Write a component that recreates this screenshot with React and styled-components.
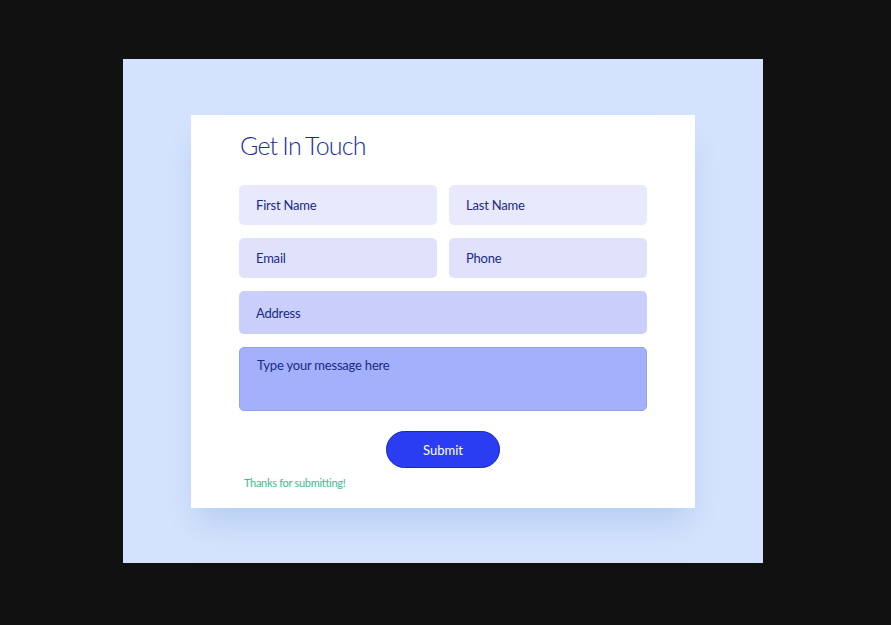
import React from 'react'
import styled, { createGlobalStyle } from 'styled-components'

const GlobalStyle = createGlobalStyle`
    html, body {
        margin: 0;
        padding: 0;
        background: #111111;
    }
    body {
        font-family: Lato, "Open Sans", sans-serif;
    }
`

const Page = styled.div`
    width: 891px;
    height: 625px;
    padding: 59px 0 0 123px;
    box-sizing: border-box;
`

const Backdrop = styled.div`
    width: 640px;
    height: 504px;
    background: #d4e3fd;
    padding: 56px 0 0 68px;
    box-sizing: border-box;
`

const Card = styled.div`
    width: 504px;
    height: 393px;
    background: #ffffff;
    box-shadow: 0 20px 30px -6px rgba(160, 190, 235, 0.6);
    padding: 14px 48px 0;
    box-sizing: border-box;
    display: flex;
    flex-direction: column;
`

const Title = styled.h1`
    margin: 0 0 23px 1px;
    font-size: 25px;
    line-height: 33px;
    font-weight: 300;
    color: #1a2d9c;
    letter-spacing: -0.8px;
    word-spacing: -1px;
`

const Form = styled.div`
    display: flex;
    flex-direction: column;
    gap: 13px;
`

const Row = styled.div`
    display: flex;
    gap: 12px;
`

const Field = styled.div`
    flex: 1;
    height: ${p => p.$h || 40}px;
    background: ${p => p.$bg};
    border-radius: 5px;
    border: ${p => p.$border ? `1px solid ${p.$border}` : 'none'};
    box-sizing: border-box;
    padding: ${p => p.$top ? '9px 17px' : '0 17px'};
    display: flex;
    align-items: ${p => p.$top ? 'flex-start' : 'center'};
    font-size: 13px;
    letter-spacing: -0.2px;
    color: #1b2a85;
`

const Actions = styled.div`
    display: flex;
    justify-content: center;
    margin-top: 20px;
`

const SubmitButton = styled.button`
    width: 114px;
    height: 37px;
    border-radius: 19px;
    border: 1px solid #1a27b8;
    background: #2b3df2;
    color: #ffffff;
    font-family: Lato, "Open Sans", sans-serif;
    font-size: 13px;
    padding: 0;
`

const Thanks = styled.div`
    margin: 8px 0 0 5px;
    font-size: 11px;
    letter-spacing: -0.3px;
    color: #3dba90;
`

const App = () => (
    <Page>
        <GlobalStyle />
        <Backdrop>
            <Card>
                <Title>Get In Touch</Title>
                <Form>
                    <Row>
                        <Field $bg="#e8e9fd">First Name</Field>
                        <Field $bg="#e8e9fd">Last Name</Field>
                    </Row>
                    <Row>
                        <Field $bg="#e0e2fc">Email</Field>
                        <Field $bg="#e0e2fc">Phone</Field>
                    </Row>
                    <Row>
                        <Field $bg="#c9cefb" $h={43}>Address</Field>
                    </Row>
                    <Row>
                        <Field $bg="#a3b0fb" $h={64} $top $border="#95a2f0">Type your message here</Field>
                    </Row>
                </Form>
                <Actions>
                    <SubmitButton>Submit</SubmitButton>
                </Actions>
                <Thanks>Thanks for submitting!</Thanks>
            </Card>
        </Backdrop>
    </Page>
)

export default App
